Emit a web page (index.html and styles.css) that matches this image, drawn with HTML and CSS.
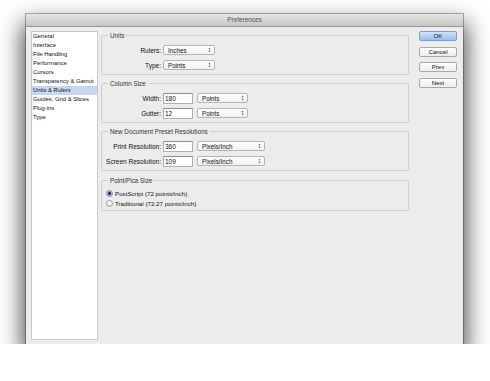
FILE: index.html
```html
<!DOCTYPE html>
<html lang="en">
<head>
    <meta charset="UTF-8">
    <title>Preferences</title>
    <link rel="stylesheet" href="styles.css">
</head>
<body>

    <div class="window">
        <div class="titlebar">Preferences</div>

        <div class="window-body">
            <ul class="pref-list">
                <li>General</li>
                <li>Interface</li>
                <li>File Handling</li>
                <li>Performance</li>
                <li>Cursors</li>
                <li>Transparency &amp; Gamut</li>
                <li class="selected">Units &amp; Rulers</li>
                <li>Guides, Grid &amp; Slices</li>
                <li>Plug-ins</li>
                <li>Type</li>
            </ul>

            <div class="main">
                <div class="group">
                    <span class="group-title">Units</span>
                    <div class="rows">
                        <div class="row">
                            <span class="label">Rulers:</span>
                            <div class="select w-52">Inches <svg class="arrows" viewBox="0 0 4 7"><path d="M0.5 2.6 L2 0.6 L3.5 2.6 Z M0.5 4.4 L2 6.4 L3.5 4.4 Z"/></svg></div>
                        </div>
                        <div class="row">
                            <span class="label">Type:</span>
                            <div class="select w-52">Points <svg class="arrows" viewBox="0 0 4 7"><path d="M0.5 2.6 L2 0.6 L3.5 2.6 Z M0.5 4.4 L2 6.4 L3.5 4.4 Z"/></svg></div>
                        </div>
                    </div>
                </div>

                <div class="group">
                    <span class="group-title">Column Size</span>
                    <div class="rows">
                        <div class="row">
                            <span class="label">Width:</span>
                            <div class="input">180</div>
                            <div class="select w-51">Points <svg class="arrows" viewBox="0 0 4 7"><path d="M0.5 2.6 L2 0.6 L3.5 2.6 Z M0.5 4.4 L2 6.4 L3.5 4.4 Z"/></svg></div>
                        </div>
                        <div class="row">
                            <span class="label">Gutter:</span>
                            <div class="input">12</div>
                            <div class="select w-51">Points <svg class="arrows" viewBox="0 0 4 7"><path d="M0.5 2.6 L2 0.6 L3.5 2.6 Z M0.5 4.4 L2 6.4 L3.5 4.4 Z"/></svg></div>
                        </div>
                    </div>
                </div>

                <div class="group">
                    <span class="group-title">New Document Preset Resolutions</span>
                    <div class="rows">
                        <div class="row">
                            <span class="label">Print Resolution:</span>
                            <div class="input">360</div>
                            <div class="select w-68">Pixels/Inch <svg class="arrows" viewBox="0 0 4 7"><path d="M0.5 2.6 L2 0.6 L3.5 2.6 Z M0.5 4.4 L2 6.4 L3.5 4.4 Z"/></svg></div>
                        </div>
                        <div class="row">
                            <span class="label">Screen Resolution:</span>
                            <div class="input">109</div>
                            <div class="select w-68">Pixels/Inch <svg class="arrows" viewBox="0 0 4 7"><path d="M0.5 2.6 L2 0.6 L3.5 2.6 Z M0.5 4.4 L2 6.4 L3.5 4.4 Z"/></svg></div>
                        </div>
                    </div>
                </div>

                <div class="group">
                    <span class="group-title">Point/Pica Size</span>
                    <div class="radios">
                        <div class="radio-row"><span class="radio checked"></span>PostScript (72 points/inch)</div>
                        <div class="radio-row"><span class="radio"></span>Traditional (72.27 points/inch)</div>
                    </div>
                </div>
            </div>

            <div class="buttons">
                <div class="button default">OK</div>
                <div class="button">Cancel</div>
                <div class="button">Prev</div>
                <div class="button">Next</div>
            </div>
        </div>
    </div>

</body>
</html>
```

FILE: styles.css
```css
body {
    margin: 0;
    background: #fff;
    font-family: "Liberation Sans", Arial, sans-serif;
    font-size: 6.3px;
    color: #111;
}

.window {
    margin: 14px 0 0 26px;
    width: 437px;
    height: 330px;
    background: #ececec;
    box-shadow: 0 0 0 1px rgba(0, 0, 0, 0.28), 0 12px 22px 3px rgba(0, 0, 0, 0.72);
    display: flex;
    flex-direction: column;
}

.titlebar {
    height: 12px;
    line-height: 12px;
    text-align: center;
    color: #555;
    font-size: 6.4px;
    background: linear-gradient(#e6e6e6, #c6c6c6);
    border-bottom: 1px solid #989898;
}

.window-body {
    flex: 1;
    display: flex;
    padding: 4px 6px 4px 5px;
}

.pref-list {
    list-style: none;
    margin: 0;
    padding: 0;
    width: 65px;
    background: #fff;
    border: 1px solid #c9c9c9;
    font-size: 5.9px;
}

.pref-list li {
    height: 9px;
    line-height: 9px;
    padding-left: 1px;
    white-space: nowrap;
}

.pref-list li.selected {
    background: #c6d6ee;
}

.main {
    width: 308px;
    margin-left: 3px;
    padding-top: 4px;
    display: flex;
    flex-direction: column;
    gap: 8px;
}

.group {
    border: 1px solid #cfcfcf;
    border-radius: 2px;
}

.group:last-child {
    margin-top: 1px;
}

.group-title {
    display: inline-block;
    margin: -4px 0 0 6px;
    padding: 0 2px;
    line-height: 8px;
    background: #ececec;
    color: #333;
    vertical-align: top;
}

.rows {
    display: flex;
    flex-direction: column;
    gap: 5px;
    padding: 2px 0 4px;
}

.row {
    display: flex;
    align-items: center;
    height: 10px;
}

.label {
    width: 59px;
    margin-right: 2px;
    text-align: right;
    white-space: nowrap;
    font-size: 6.5px;
}

.select {
    height: 10px;
    box-sizing: border-box;
    border: 1px solid #b4b4b4;
    border-radius: 2px;
    background: linear-gradient(#fefefe, #f1f1f1);
    padding-left: 4px;
    display: flex;
    align-items: center;
    justify-content: space-between;
}

.arrows {
    width: 3px;
    height: 6px;
    margin-right: 3px;
    fill: #555;
}

.w-52 { width: 52px; }
.w-51 { width: 51px; margin-left: 4px; }
.w-68 { width: 68px; margin-left: 4px; }

.input {
    width: 30px;
    height: 11px;
    box-sizing: border-box;
    background: #fff;
    border: 1px solid #b0b0b0;
    border-top-color: #8e8e8e;
    padding-left: 1px;
    line-height: 9px;
    font-size: 6.5px;
}

.radios {
    padding: 0 0 2px 4px;
    font-size: 6.2px;
}

.radio-row {
    height: 10px;
    display: flex;
    align-items: center;
}

.radio {
    width: 7px;
    height: 7px;
    box-sizing: border-box;
    border-radius: 50%;
    border: 1px solid #9a9a9a;
    background: linear-gradient(#fdfdfd, #e4e4e4);
    margin-right: 2px;
}

.radio.checked {
    border-color: #6f8fbf;
    background: radial-gradient(circle, #223 0 1.2px, #8db3e8 1.6px, #b9d1f3);
}

.buttons {
    width: 38px;
    margin-left: 10px;
    display: flex;
    flex-direction: column;
    gap: 5.5px;
}

.button {
    height: 10px;
    box-sizing: border-box;
    border: 1px solid #a9a9a9;
    border-radius: 2px;
    background: linear-gradient(#ffffff, #ececec);
    text-align: center;
    line-height: 8px;
    font-size: 6.1px;
}

.button.default {
    border-color: #7d9cc9;
    background: linear-gradient(#d3e2f7, #9dbfec);
}
```
